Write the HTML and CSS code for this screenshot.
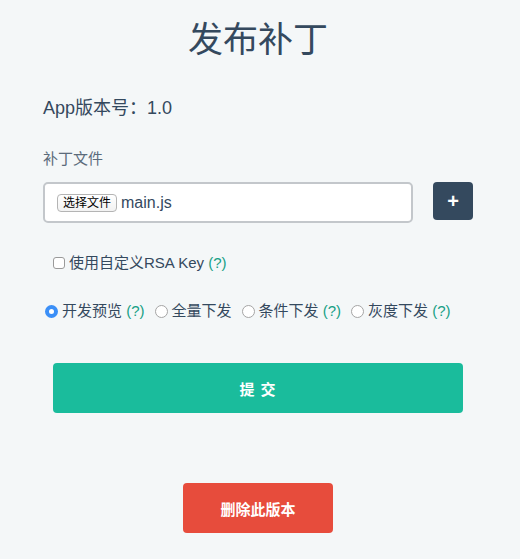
FILE: index.html
```html
<!DOCTYPE html>
<html lang="zh">
<head>
<meta charset="utf-8">
<title>发布补丁</title>
<link rel="stylesheet" href="styles.css">
</head>
<body>
<div class="page">
  <h1 class="title">发布补丁</h1>
  <div class="version">App版本号：1.0</div>
  <div class="field-label">补丁文件</div>
  <div class="file-row">
    <div class="file-box">
      <span class="file-btn">选择文件</span>
      <span class="file-name">main.js</span>
    </div>
    <button class="plus-btn" type="button">+</button>
  </div>
  <label class="check-row">
    <span class="checkbox"></span>
    <span>使用自定义RSA Key <span class="help">(?)</span></span>
  </label>
  <div class="radio-row">
    <label class="radio-item"><span class="radio checked"></span><span>开发预览 <span class="help">(?)</span></span></label>
    <label class="radio-item"><span class="radio"></span><span>全量下发</span></label>
    <label class="radio-item"><span class="radio"></span><span>条件下发 <span class="help">(?)</span></span></label>
    <label class="radio-item"><span class="radio"></span><span>灰度下发 <span class="help">(?)</span></span></label>
  </div>
  <button class="submit-btn" type="button">提 交</button>
  <button class="delete-btn" type="button">删除此版本</button>
</div>
</body>
</html>
```
FILE: styles.css
```css
html, body {
  margin: 0;
  padding: 0;
  background: #f4f7f8;
}
body {
  font-family: "Liberation Sans", "Noto Sans CJK SC", sans-serif;
  color: #34495e;
  width: 520px;
  height: 559px;
  overflow: hidden;
}
.page {
  padding: 20px 43px 0;
}
.title {
  margin: 0;
  font-size: 35px;
  line-height: 40px;
  font-weight: 400;
  text-align: center;
  padding-right: 4px;
}
.version {
  margin-top: 36px;
  font-size: 18px;
  line-height: 24px;
}
.field-label {
  margin-top: 29px;
  font-size: 15px;
  line-height: 20px;
  color: #5b6b7b;
}
.file-row {
  margin-top: 13px;
  display: flex;
  align-items: flex-start;
  gap: 20px;
}
.file-box {
  box-sizing: border-box;
  width: 370px;
  height: 41px;
  background: #fff;
  border: 2px solid #c3c7cb;
  border-radius: 5px;
  display: flex;
  align-items: center;
  padding-left: 12px;
  gap: 4px;
}
.file-btn {
  box-sizing: border-box;
  height: 18px;
  padding: 0 5px;
  border: 1px solid #b4b4b4;
  border-radius: 4px;
  background: linear-gradient(#fff, #f2f2f2);
  font-size: 12px;
  line-height: 16px;
  color: #000;
}
.file-name {
  font-size: 16px;
  color: #34495e;
}
.plus-btn {
  width: 40px;
  height: 38px;
  border: 0;
  border-radius: 4px;
  background: #34495e;
  color: #fff;
  font-family: "Liberation Sans", sans-serif;
  font-size: 20px;
  font-weight: bold;
  line-height: 38px;
  padding: 0;
}
.check-row {
  margin-top: 30px;
  padding-left: 10px;
  display: flex;
  align-items: center;
  gap: 4px;
  font-size: 15px;
  line-height: 20px;
}
.checkbox {
  box-sizing: border-box;
  width: 12px;
  height: 12px;
  border: 1px solid #9a9a9a;
  border-radius: 3px;
  background: #fff;
}
.help {
  color: #16a085;
}
.radio-row {
  margin-top: 28px;
  padding-left: 2px;
  display: flex;
  align-items: center;
  gap: 10px;
  font-size: 15px;
  line-height: 20px;
}
.radio-item {
  display: flex;
  align-items: center;
  gap: 4px;
}
.radio {
  box-sizing: border-box;
  width: 13px;
  height: 13px;
  border-radius: 50%;
  border: 1px solid #a5a5a5;
  background: #fff;
}
.radio.checked {
  border: 4px solid #3b8ff7;
  background: #fff;
}
.submit-btn {
  display: block;
  margin: 42px 0 0 10px;
  width: 410px;
  height: 50px;
  border: 0;
  border-radius: 4px;
  background: #1abc9c;
  color: #fff;
  font-family: "Liberation Sans", "Noto Sans CJK SC", sans-serif;
  font-size: 15px;
  font-weight: bold;
  letter-spacing: 1px;
}
.delete-btn {
  display: block;
  margin: 70px 0 0 140px;
  width: 150px;
  height: 50px;
  border: 0;
  border-radius: 4px;
  background: #e74c3c;
  color: #fff;
  font-family: "Liberation Sans", "Noto Sans CJK SC", sans-serif;
  font-size: 15px;
  font-weight: bold;
}
```
